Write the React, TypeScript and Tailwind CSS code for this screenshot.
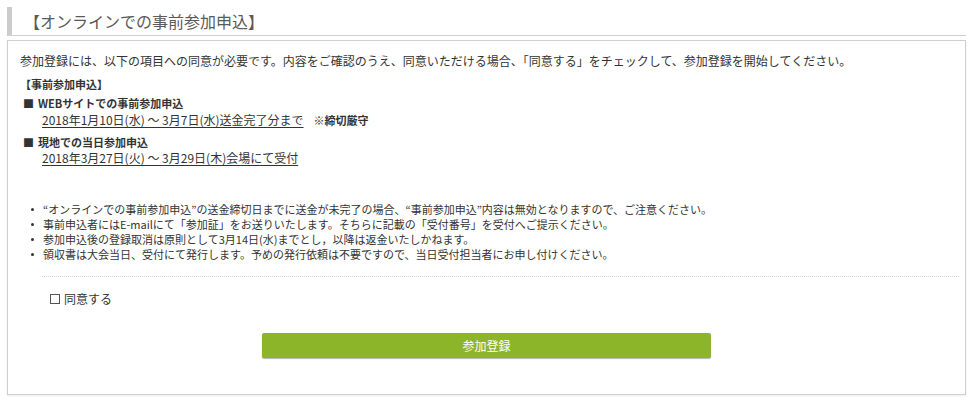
const NOTES = [
  "“オンラインでの事前参加申込”の送金締切日までに送金が未完了の場合、“事前参加申込”内容は無効となりますので、ご注意ください。",
  "事前申込者にはE-mailにて「参加証」をお送りいたします。そちらに記載の「受付番号」を受付へご提示ください。",
  "参加申込後の登録取消は原則として3月14日(水)までとし，以降は返金いたしかねます。",
  "領収書は大会当日、受付にて発行します。予めの発行依頼は不要ですので、当日受付担当者にお申し付けください。",
]

export default function App() {
  return (
    <div className="h-[405px] w-[973px] bg-white px-[7px] pt-[7px] font-['Noto_Sans_CJK_JP',sans-serif] text-[#333]">
      {/* 見出し */}
      <div className="flex h-[29px] border-b border-[#d0d0d0]">
        <div className="w-[5px] bg-[#cccccc]" />
        <h2 className="pl-[12px] text-[16px] leading-[28px] text-[#5a5a5a]">【オンラインでの事前参加申込】</h2>
      </div>

      <div className="mt-[4px] h-[355px] border border-[#cfcfcf] px-[12px] pt-[11px] shadow-[0_1px_2px_rgba(0,0,0,0.08)]">
        <p className="text-[12px] leading-[18px]">
          参加登録には、以下の項目への同意が必要です。内容をご確認のうえ、同意いただける場合、「同意する」をチェックして、参加登録を開始してください。
        </p>

        <p className="mt-[6px] text-[11px] font-bold leading-[16px]">【事前参加申込】</p>

        <p className="mt-[3px] text-[11px] font-bold leading-[16px]">
          <span className="pl-[3px] pr-[4px]">■</span>WEBサイトでの事前参加申込
        </p>
        <p className="mt-[1px] pl-[22px] text-[12px] leading-[16px]">
          <span className="underline underline-offset-2">2018年1月10日(水) ～ 3月7日(水)送金完了分まで</span>
          <span className="ml-[10px] text-[11px] font-bold">※締切厳守</span>
        </p>

        <p className="mt-[6px] text-[11px] font-bold leading-[16px]">
          <span className="pl-[3px] pr-[4px]">■</span>現地での当日参加申込
        </p>
        <p className="pl-[22px] text-[12px] leading-[16px]">
          <span className="underline underline-offset-2">2018年3月27日(火) ～ 3月29日(木)会場にて受付</span>
        </p>

        <ul className="mt-[36px] ml-[11px] text-[11px] leading-[15px]">
          {NOTES.map((n) => (
            <li key={n} className="flex">
              <span className="flex w-[12px] shrink-0 items-center">
                <span className="h-[3px] w-[3px] rounded-full bg-[#333]" />
              </span>
              <span>{n}</span>
            </li>
          ))}
        </ul>

        <div className="mt-[14px] ml-[22px] mr-[-6px] border-t border-dotted border-[#d8d8d8]" />

        <label className="mt-[13px] ml-[30px] flex items-center text-[12px] leading-[18px]">
          <span className="h-[10px] w-[10px] border border-[#555] bg-white" />
          <span className="ml-[4px]">同意する</span>
        </label>

        <button
          type="button"
          className="mx-auto mt-[25px] block h-[25px] w-[449px] rounded-[2px] bg-[#8db52a] text-[12px] text-white shadow-[0_1px_1px_rgba(0,0,0,0.3)]"
        >
          参加登録
        </button>
      </div>
    </div>
  )
}
